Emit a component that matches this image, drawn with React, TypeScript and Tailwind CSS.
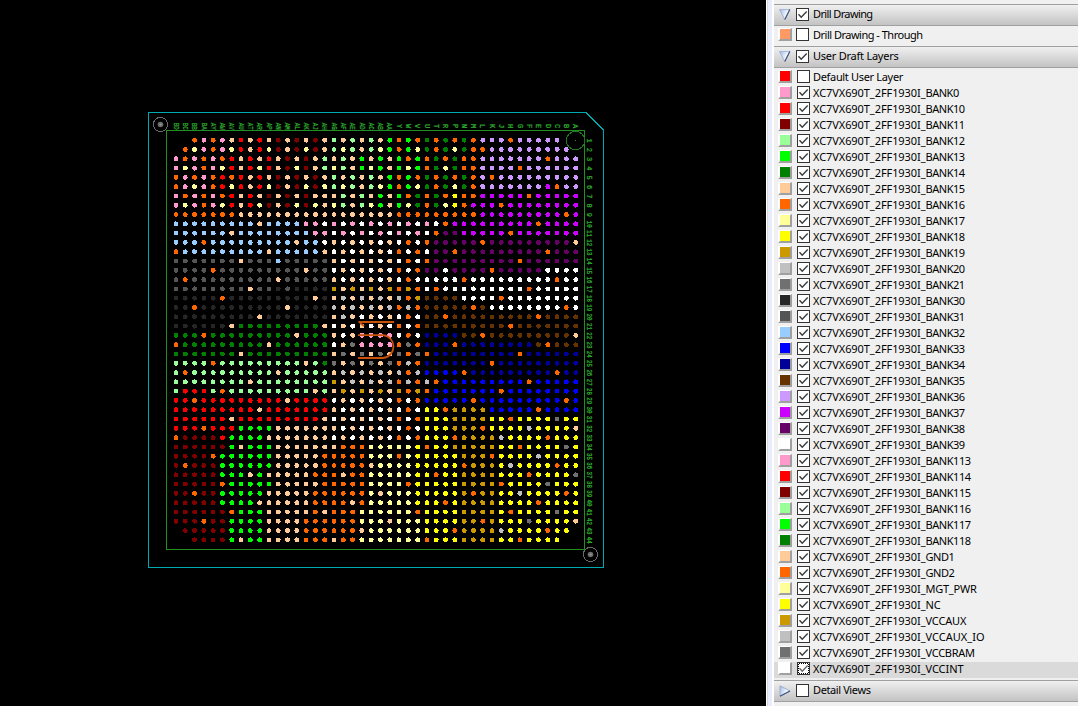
import React, { useLayoutEffect, useRef, useState } from "react";

const PITCH = 9.295;
const X0 = 176;
const Y0 = 140.2;

const COLORS: Record<string, string> = {
  P: "#ff99cc", R: "#ff0000", M: "#800000", L: "#99ff99", G: "#00ff00", g: "#008000",
  T: "#ffcc99", O: "#ff6600", Y: "#ffff99", Z: "#ffff00", A: "#cc9900", s: "#c0c0c0",
  d: "#707070", k: "#262626", e: "#555555", B: "#99ccff", b: "#0000ff", n: "#000099",
  w: "#663300", V: "#cc99ff", v: "#cc00ff", u: "#660066", W: "#ffffff",
};

const BALLS: string[] = [
  "..OPOPTRTRTMTM" + "TMTLTLTLTGOGOgOg" + "OgOVVVOVVVVV..",
  ".OYPOPYRTRYMTM" + "YMTLYLTLYGOGYgOg" + "YgOOVVVVVVVVV.",
  "POPOPORTRTRTMT" + "MTLTLTGTGTGOGOgO" + "gOOVVVVVVVOVVV",
  "PYPOPYRTRYRTMY" + "MTLYLTGYGTGYGOgY" + "gOOVVVVOVVVVVV",
  "OPOPORORTRTMTM" + "TMTLTLTLTGOGOgOg" + "OgOVOVVVVVVVVV",
  "OPYPORYRTRYMTM" + "YMYLYLTLYGOGYgOg" + "YgOVVVVVVVvOVV",
  "POPOPORTRTMTMT" + "MTTTLTLTGTGOgOgO" + "ZOOvvvvvOvvvvv",
  "PYPOPYRTRYMTMY" + "MYTYLTLYGTGYgOgY" + "ZOvvvOvvvvvvvv",
  "OOOOOOOTTTTTTT" + "TTTTTTTTTTOOOOOO" + "OOOvvvvvvvvvOv",
  "BBBBBBBBBTBBBB" + "PPWPWPWPWPWPWPWO" + "vvvvvvvvvOvvvv",
  "BBBBBBTBBBBBBB" + "BPPWPWPWPWPWPWOu" + "uvvvvvOvvvvvvv",
  "BBBOBBBBBBBBBT" + "BBWTWTWTWTWOWOuu" + "uuuOuuuuuuuuuT",
  "OBBBBBBBBBTBBB" + "BBTWTWTWTWOWOWuu" + "OuuuuuuuuuOuuu",
  "eeeeeeeTeeeBee" + "eeeTWTWTWTWOWOuu" + "uuuuuuuOuuuuuu",
  "eeeeOeeeeeeeee" + "TeeWTWTWTWOWOuuW" + "uuuuOuuuuuWWWW",
  "eOeeeeeeeeeTee" + "eeeTWTWTWTWOWWWW" + "WOWWWWWWWWWOWW",
  "eeeeeeeeTeekek" + "kkkATATATAOAOWOW" + "WWWWWWWWOWWWWW",
  "kkkkkOkkkkkkkk" + "kTkTsTsTsTsOAwww" + "wWWWWOWWWWWWWW",
  "kkOkkkkkkkkkTk" + "kkksTsTsTsOsOwww" + "wwOwWWWWWWWWOW",
  "kkkkkkkkkTkkkk" + "kkkTsTWTWTWOWwwO" + "wwwwwwwwwOwwww",
  "kkkkkkTggggggg" + "ggTWTWTWTWOWOwww" + "wwwwwwOwwwwwww",
  "gggOgggggggggT" + "gggTWTPPPPWOWnnn" + "nwwOwwwwwwwwwT",
  "OgggggggggTggg" + "gggWTdPPPPOdOnnn" + "OnnnnnnnnwOwww",
  "gggggggTgggggg" + "gggTdTdTdTdOdOnn" + "nnnnnnnOnnnnnn",
  "LLLLOLLLLLLLLL" + "TLgdTdTdTdOsOnnn" + "nnnnOnnnnnnnnn",
  "LOLLLLLLLLLTLL" + "LLLTsTsTsTsOsbbb" + "bOnnnnnnnnnOnn",
  "LLLLLLLLTLLLLL" + "LLLATsTsTsOsOsOb" + "bbbbbbbbObbbbb",
  "LRRRLOLLLLLLLL" + "LTLTATATATAOAObb" + "bbbbbObbbbbbbb",
  "RRORRRRRRRRRTR" + "RRRWTWTWTWOWObbb" + "bbObbbbbbbbbOb",
  "RRRRRRRRRTRRRR" + "RRRTWTWTWTWOWZZO" + "AAAAbbbbbObbbb",
  "RRRRRRTRRRRRRR" + "RRTWTWTWTWOWOZZZ" + "AAAAZZOZZZZdZZ",
  "RRRORRRGGGGTTT" + "TTTTWTWTWTWOWZZZ" + "AAAOZZZZsZZZZT",
  "OMMMMRGGGGTTTT" + "TTTWTWTWTWOWOZZZ" + "OAAAAsZZZZOZZZ",
  "MMMMMMGTGGGTTT" + "TTTTOOOYYYYYZOZZ" + "AAAAAZZOZZZZdZ",
  "MMMMOGGGGGGTTT" + "TTOOOOOYYYOYZZZZ" + "ZAAAOZZZZsZZZZ",
  "MOMMMGGGGGGTTT" + "TTOOOOOTYYYYZZZZ" + "ZOAAAZsZZZZOZZ",
  "MMMMMGGGTGTTTT" + "TOOOTOOYYYYYZZOZ" + "ZAAAAZZZOZZZZd",
  "MMMMMOGGGGGTTT" + "TTOOOOOYYYYOZZZZ" + "ZAAAAOZZZZdZZZ",
  "MMOMMGGGGGTTTT" + "TOOOOOOYTYYYZZZZ" + "ZAOAAZZsZZZZOZ",
  "MMMMMGGGGTTTTT" + "TOOOOTOYYYYYZZZO" + "ZAAAAZZZZOZZZZ",
  "MMMMMMOGGGTTTT" + "TOTOOOYYYYYYOZZZ" + "ZAAAAZOZZZZdZZ",
  "MMMOMMGGGGTTTT" + "OOOOOOYYYTYYYZZZ" + "ZAAOAZZZdZZZZT",
  ".MMMMMGGGGTTTT" + "OOOOOOTYYYYYYZZZ" + "OAAAAsZZZZOZZ.",
  "..MMMMGTGGTTTT" + "OOOTOOYYYYYYYOZZ" + "ZAAAAZZOZZZZ..",
];

const LETTERS = "ABCDEFGHJKLMNPRTUVWY".split("");
const COLUMN_NAMES = [
  ...LETTERS,
  ...LETTERS.map((l) => "A" + l),
  "BA", "BB", "BC", "BD",
].reverse();

function Fiducial({ x, y }: { x: number; y: number }) {
  return (
    <g>
      <circle cx={x} cy={y} r="7.1" fill="none" stroke="#6a6a6a" shapeRendering="crispEdges" />
      <circle cx={x} cy={y} r="2.8" fill="#6c6c6c" />
      <path d={`M${x - 1} ${y}H${x + 1.5}M${x} ${y - 1}V${y + 1}`} stroke="#969696" strokeWidth="0.8" />
    </g>
  );
}

function PinLabel({ x, y, text }: { x: number; y: number; text: string }) {
  return (
    <text
      transform={`translate(${x} ${y}) rotate(90)`}
      textLength={text.length > 1 ? 7 : undefined}
      lengthAdjust="spacingAndGlyphs"
    >
      {text}
    </text>
  );
}

function Board() {
  return (
    <svg width="766" height="706" viewBox="0 0 766 706" className="block shrink-0">
      <path d="M148.5 112.5H586L603.5 130V567.5H148.5Z" fill="none" stroke="#00a8b0" shapeRendering="crispEdges" />
      <path d="M166.5 130.5H584.5V549.5H166.5Z" fill="none" stroke="#219021" shapeRendering="crispEdges" />
      {BALLS.map((row, r) =>
        row.split("").map((c, i) =>
          c === "." ? null : (
            <circle
              key={`${r}-${i}`}
              cx={X0 + i * PITCH}
              cy={Y0 + r * PITCH}
              r="2.45"
              fill={COLORS[c]}
              shapeRendering="crispEdges"
            />
          ),
        ),
      )}
      <circle cx="575.5" cy="140.5" r="9.2" fill="none" stroke="#1c7a1c" shapeRendering="crispEdges" />
      <rect x="575" y="140" width="1" height="1" fill="#219021" />
      <g
        fill="#2fb02f"
        stroke="#2fb02f"
        strokeWidth="0.25"
        fontFamily="'Liberation Mono', monospace"
        fontSize="7"
        textAnchor="middle"
      >
        {COLUMN_NAMES.map((n, i) => (
          <PinLabel key={n} x={X0 + i * PITCH - 2.3} y={126.2} text={n} />
        ))}
        {BALLS.map((_, r) => (
          <PinLabel key={r} x={587.4} y={Y0 + r * PITCH + 0.3} text={String(r + 1)} />
        ))}
      </g>
      <path
        d="M358.5 322H394M360 323l4 3M358 335.2H383C397 337 397 356 383 358H358"
        fill="none"
        stroke="#c85208"
        strokeWidth="1.8"
      />
      <Fiducial x={160.5} y={124.5} />
      <Fiducial x={590.5} y={554.5} />
    </svg>
  );
}

/** Spreads or tightens the letters so that the text takes the given advance width. */
function FitText({ text, width }: { text: string; width: number }) {
  const ref = useRef<HTMLSpanElement>(null);
  const [spacing, setSpacing] = useState(0);
  useLayoutEffect(() => {
    const el = ref.current;
    if (!el) return;
    el.style.letterSpacing = "0px";
    setSpacing((width - el.getBoundingClientRect().width) / text.length);
  }, [text, width]);
  return (
    <span ref={ref} className="inline-block leading-none" style={{ letterSpacing: `${spacing}px` }}>
      {text}
    </span>
  );
}

function Check({ on, focused }: { on: boolean; focused?: boolean }) {
  return (
    <svg width="13" height="13" viewBox="0 0 13 13" className="block shrink-0">
      <rect x="0.5" y="0.5" width="12" height="12" fill="#fff" stroke="#333" />
      {on && <path d="M2.5 6.3L5.2 9.2L10.7 3.5" fill="none" stroke={focused ? "#666" : "#3c3c3c"} strokeWidth="1.4" />}
      {focused && (
        <path d="M2 1.5H12M2 11.5H12M1.5 2V12M11.5 2V12" fill="none" stroke="#000" strokeDasharray="1 1" />
      )}
    </svg>
  );
}

function Swatch({ color }: { color: string }) {
  return (
    <div
      className="h-[13px] w-[14px] shrink-0 border-t border-r-2 border-b-2 border-l-2 border-t-white border-r-[#a0a0a0] border-b-[#a0a0a0] border-l-white"
      style={{ backgroundColor: color }}
    />
  );
}

function Header({ label, open, on, width }: { label: string; open: boolean; on: boolean; width: number }) {
  return (
    <div className="flex h-[22px] shrink-0 items-start border-y border-[#a0a0a0] bg-linear-to-b from-[#f0f0f0] to-[#c3c3c3] pt-[3px] pl-[5px]">
      <svg width="12" height="12" viewBox="0 0 12 12" className="mt-px mr-[5px] block shrink-0">
        <defs>
          <linearGradient id="arrow" x1="0" y1="0" x2="1" y2="0.4">
            <stop offset="0" stopColor="#a3b9e0" />
            <stop offset="0.75" stopColor="#f4f8ff" />
          </linearGradient>
        </defs>
        {open ? (
          <>
            <path d="M0.5 0.6H11L5.8 10.6Z" fill="url(#arrow)" stroke="#92a9d2" strokeWidth="0.8" />
            <path d="M10.8 0.6L5.8 10.6" stroke="#3d5680" strokeWidth="1.2" />
          </>
        ) : (
          <>
            <path d="M1 0.8L11 6L1 11.2Z" fill="url(#arrow)" stroke="#8ea6ce" strokeWidth="0.8" />
            <path d="M1 11.2L11 6" stroke="#3d5680" strokeWidth="1.2" />
          </>
        )}
      </svg>
      <Check on={on} />
      <div className="ml-1 flex">
        <FitText text={label} width={width} />
      </div>
    </div>
  );
}

const PART = "XC7VX690T_2FF1930I_";
const LAYERS: [string, string, number][] = [
  ["BANK0", "#ff99cc", 33.2], ["BANK10", "#ff0000", 39.2], ["BANK11", "#800000", 39.2],
  ["BANK12", "#99ff99", 39.2], ["BANK13", "#00ff00", 39.2], ["BANK14", "#008000", 39.2],
  ["BANK15", "#ffcc99", 39.2], ["BANK16", "#ff6600", 39.2], ["BANK17", "#ffff99", 39.2],
  ["BANK18", "#ffff00", 39.2], ["BANK19", "#cc9900", 39.2], ["BANK20", "#c0c0c0", 39.2],
  ["BANK21", "#707070", 39.2], ["BANK30", "#262626", 39.2], ["BANK31", "#555555", 39.2],
  ["BANK32", "#99ccff", 39.2], ["BANK33", "#0000ff", 39.2], ["BANK34", "#000099", 39.2],
  ["BANK35", "#663300", 39.2], ["BANK36", "#cc99ff", 39.2], ["BANK37", "#cc00ff", 39.2],
  ["BANK38", "#660066", 39.2], ["BANK39", "#ffffff", 39.2], ["BANK113", "#ff99cc", 45.2],
  ["BANK114", "#ff0000", 45.2], ["BANK115", "#800000", 45.2], ["BANK116", "#99ff99", 45.2],
  ["BANK117", "#00ff00", 45.2], ["BANK118", "#008000", 45.2], ["GND1", "#ffcc99", 28.8],
  ["GND2", "#ff6600", 28.8], ["MGT_PWR", "#ffff99", 51], ["NC", "#ffff00", 15],
  ["VCCAUX", "#cc9900", 40.7], ["VCCAUX_IO", "#c0c0c0", 59], ["VCCBRAM", "#707070", 49.2],
  ["VCCINT", "#ffffff", 38],
];

function LayerRow({ color, on, selected, children }: { color: string; on: boolean; selected?: boolean; children: React.ReactNode }) {
  return (
    <div className={selected ? "flex h-4 shrink-0 items-start bg-[#dadada] pl-1" : "flex h-4 shrink-0 items-start pl-1"}>
      <Swatch color={color} />
      <div className="w-[5px] shrink-0" />
      <Check on={on} focused={selected} />
      <div className="mt-px ml-[3px] flex">{children}</div>
    </div>
  );
}

export default function App() {
  return (
    <div className="flex h-[706px] w-[1078px] overflow-hidden bg-black">
      <Board />
      <div className="w-px shrink-0 bg-white" />
      <div className="w-px shrink-0 bg-[#d8d8d8]" />
      <div className="w-[4px] shrink-0 bg-[#e9ecfa]" />
      <div className="w-[2px] shrink-0 bg-white" />
      <div className="flex min-w-0 flex-1 flex-col bg-[#f0f0f0] pt-1 font-['Noto_Sans',sans-serif] text-[11px] whitespace-nowrap text-black">
        <Header label="Drill Drawing" open on width={59.5} />
        <div className="flex h-5 shrink-0 items-start pt-[2px] pl-1">
          <Swatch color="#ff9966" />
          <div className="w-1 shrink-0" />
          <Check on={false} />
          <div className="mt-px ml-1 flex">
            <FitText text="Drill Drawing - Through" width={109.5} />
          </div>
        </div>
        <Header label="User Draft Layers" open on width={85.5} />
        <div className="flex shrink-0 flex-col py-[2px]">
          <LayerRow color="#ff0000" on={false}>
            <FitText text="Default User Layer" width={90} />
          </LayerRow>
          {LAYERS.map(([name, color, width], i) => (
            <LayerRow key={name} color={color} on selected={i === LAYERS.length - 1}>
              <FitText text={PART} width={112.5} />
              <FitText text={name} width={width} />
            </LayerRow>
          ))}
        </div>
        <Header label="Detail Views" open={false} on={false} width={57.5} />
      </div>
    </div>
  );
}
